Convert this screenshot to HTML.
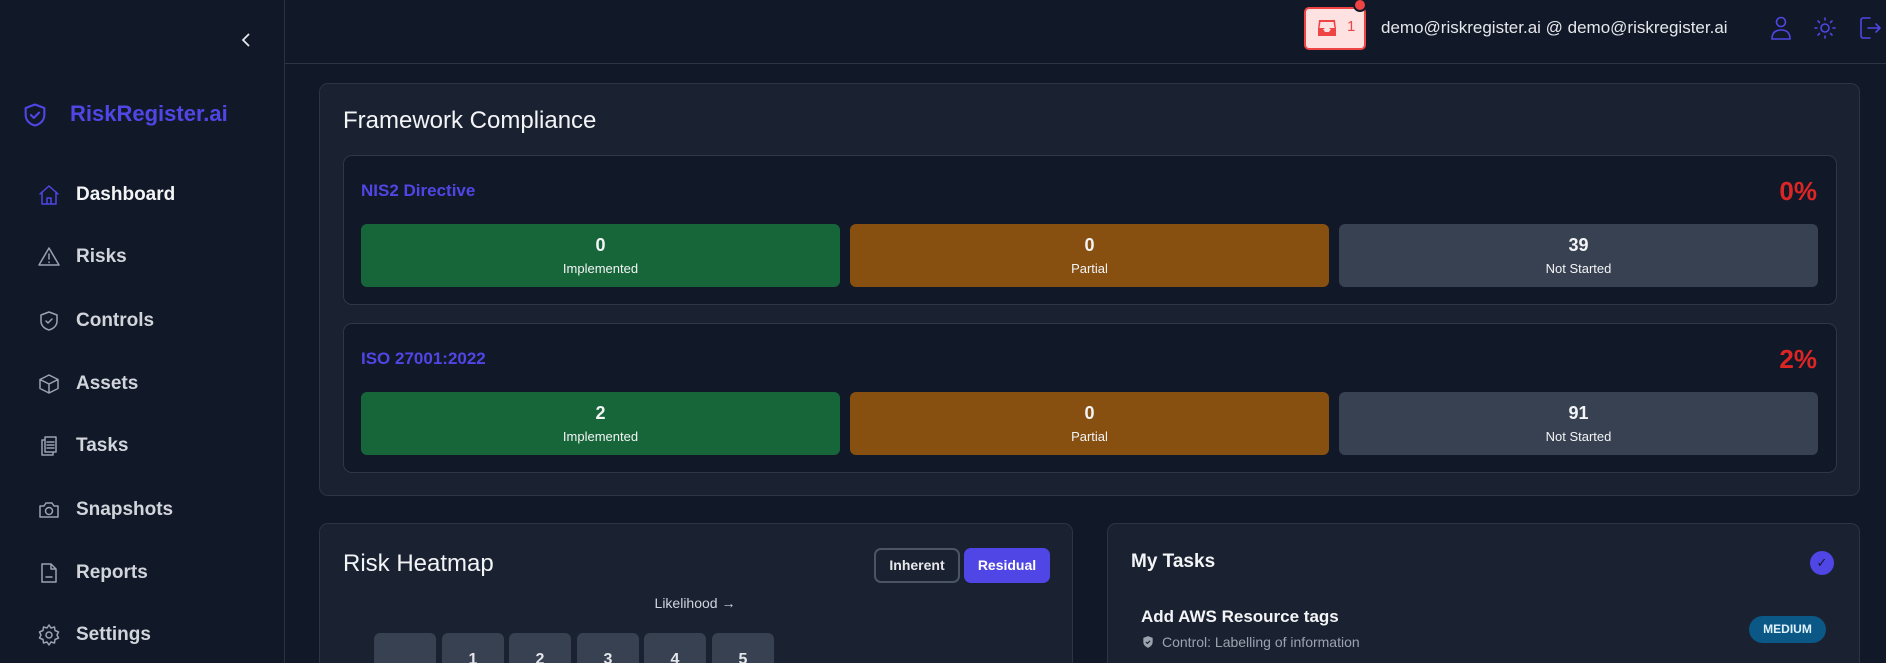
<!DOCTYPE html>
<html style="overflow:hidden;height:663px"><head><meta charset="utf-8"><style>
*{box-sizing:border-box;margin:0;padding:0}
body{width:1886px;height:663px;overflow:hidden;background:#111827;font-family:"Liberation Sans",sans-serif;color:#e5e7eb;position:relative}
.a{position:absolute}
.side{left:0;top:0;width:285px;height:663px;border-right:1px solid #2a3240;background:#111827}
.hdr{left:285px;top:0;right:0;height:64px;border-bottom:1px solid #2d3544}
.nav{left:37px;width:240px;height:30px;display:flex;align-items:center;font-size:19px;font-weight:bold;color:#d1d5db}
.nav svg{width:24px;height:24px;margin-right:15px;fill:none;stroke:#9ca3af;stroke-width:1.5;stroke-linecap:round;stroke-linejoin:round}
.card{background:#1a2131;border:1px solid #2d3544;border-radius:9px}
.inner{background:#111827;border:1px solid #2f3746;border-radius:9px}
.box{border-radius:6px;text-align:center;color:#f3f4f6}
.box b{display:block;font-size:18px;margin-top:11px}
.box span{display:block;font-size:13px;margin-top:5px}
.g{background:#17663a}.o{background:#874f10}.s{background:#374151}
.fw{font-size:17px;font-weight:bold;color:#4f46e5}
.pct{font-size:26px;font-weight:bold;color:#dc2626}
.cell{top:633px;width:62px;height:30px;background:#374151;border-radius:6px 6px 0 0;text-align:center;font-size:16px;font-weight:bold;padding-top:18px}
</style></head><body>
<div class="a side"></div>
<div class="a hdr"></div>
<svg class="a" style="left:238px;top:31px" width="16" height="18" viewBox="0 0 16 18"><path d="M11 3 L5 9 L11 15" stroke="#e5e7eb" stroke-width="1.8" fill="none"/></svg>
<svg class="a" style="left:21px;top:101px" width="28" height="28" viewBox="0 0 24 24" fill="none" stroke="#4f46e5" stroke-width="1.8" stroke-linecap="round" stroke-linejoin="round"><path d="M12 3 L20 6 V12 C20 17 16 20 12 21 C8 20 4 17 4 12 V6 Z"/><path d="M8.5 12 L11 14.5 L15.5 10"/></svg>
<div class="a" style="left:70px;top:101px;font-size:22px;font-weight:bold;color:#4f46e5">RiskRegister.ai</div>

<div class="a nav" style="top:180px;color:#f3f4f6"><svg viewBox="0 0 24 24" style="stroke:#4f46e5"><path d="M3 11 L12 3 L21 11 M5 9 V21 H19 V9 M10 21 V15 H14 V21"/></svg>Dashboard</div>
<div class="a nav" style="top:242px"><svg viewBox="0 0 24 24"><path d="M12 3 L22 20 H2 Z M12 9 V14 M12 17 V17.5"/></svg>Risks</div>
<div class="a nav" style="top:306px"><svg viewBox="0 0 24 24"><path d="M12 3 L20 6 V12 C20 17 16 20 12 21 C8 20 4 17 4 12 V6 Z M9 12 L11 14 L15 10"/></svg>Controls</div>
<div class="a nav" style="top:369px"><svg viewBox="0 0 24 24"><path d="M12 3 L21 7.5 V16.5 L12 21 L3 16.5 V7.5 Z M3 7.5 L12 12 L21 7.5 M12 12 V21"/></svg>Assets</div>
<div class="a nav" style="top:431px"><svg viewBox="0 0 24 24"><path d="M8 6 H5 V21 H16 V18 M8 3 H19 V18 H8 Z M10 8 H17 M10 11 H17 M10 14 H17"/></svg>Tasks</div>
<div class="a nav" style="top:495px"><svg viewBox="0 0 24 24"><path d="M3 8 H7 L9 5 H15 L17 8 H21 V19 H3 Z"/><circle cx="12" cy="13" r="3.5"/></svg>Snapshots</div>
<div class="a nav" style="top:558px"><svg viewBox="0 0 24 24"><path d="M5 3 H14 L19 8 V21 H5 Z M14 3 V8 H19 M9 16 H15"/></svg>Reports</div>
<div class="a nav" style="top:620px"><svg viewBox="0 0 24 24"><circle cx="12" cy="12" r="3"/><path d="M12 2 L14 5 L17.5 4 L18 7.5 L21.5 9 L20 12 L21.5 15 L18 16.5 L17.5 20 L14 19 L12 22 L10 19 L6.5 20 L6 16.5 L2.5 15 L4 12 L2.5 9 L6 7.5 L6.5 4 L10 5 Z"/></svg>Settings</div>

<div class="a" style="left:1304px;top:7px;width:62px;height:43px;background:#fee2e2;border:2px solid #ef4444;border-radius:5px"></div>
<svg class="a" style="left:1314px;top:16px" width="26" height="24" viewBox="0 0 24 24"><path d="M4 4 H20 L21 13 V20 H3 V13 Z" fill="#ef4444"/><path d="M3 13 H8 L10 16 H14 L16 13 H21" fill="#fee2e2"/><path d="M5.5 6 H18.5 L19.5 12 H15 L13.5 14 H10.5 L9 12 H4.5 Z" fill="#fee2e2"/></svg>
<div class="a" style="left:1347px;top:18px;font-size:15px;color:#ef4444">1</div>
<div class="a" style="left:1353px;top:-2px;width:14px;height:14px;border-radius:50%;background:#ef4444;border:2px solid #111827"></div>
<div class="a" style="left:1381px;top:18px;font-size:17px;color:#e5e7eb">demo@riskregister.ai @ demo@riskregister.ai</div>
<svg class="a" style="left:1769px;top:15px" width="24" height="26" viewBox="0 0 24 26" fill="none" stroke="#4f46e5" stroke-width="1.6"><circle cx="12" cy="7" r="4.5"/><path d="M3 24 C3 17 7 15 12 15 C17 15 21 17 21 24 Z"/></svg>
<svg class="a" style="left:1813px;top:16px" width="24" height="24" viewBox="0 0 24 24" fill="none" stroke="#4f46e5" stroke-width="1.6" stroke-linecap="round"><circle cx="12" cy="12" r="4"/><path d="M12 2V4M12 20V22M2 12H4M20 12H22M5 5L6.5 6.5M17.5 17.5L19 19M5 19L6.5 17.5M17.5 6.5L19 5"/></svg>
<svg class="a" style="left:1857px;top:15px" width="26" height="26" viewBox="0 0 26 26" fill="none" stroke="#4f46e5" stroke-width="1.6" stroke-linecap="round" stroke-linejoin="round"><path d="M13 3 H6 C5 3 4 4 4 5 V21 C4 22 5 23 6 23 H13 M11 13 H23 M19 9 L23 13 L19 17"/></svg>

<div class="a card" style="left:319px;top:83px;width:1541px;height:413px"></div>
<div class="a" style="left:343px;top:107px;font-size:24px;color:#f3f4f6">Framework Compliance</div>

<div class="a inner" style="left:343px;top:155px;width:1494px;height:150px"></div>
<div class="a fw" style="left:361px;top:181px">NIS2 Directive</div>
<div class="a pct" style="right:69px;top:176px">0%</div>
<div class="a box g" style="left:361px;top:224px;width:479px;height:63px"><b>0</b><span>Implemented</span></div>
<div class="a box o" style="left:850px;top:224px;width:479px;height:63px"><b>0</b><span>Partial</span></div>
<div class="a box s" style="left:1339px;top:224px;width:479px;height:63px"><b>39</b><span>Not Started</span></div>

<div class="a inner" style="left:343px;top:323px;width:1494px;height:150px"></div>
<div class="a fw" style="left:361px;top:349px">ISO 27001:2022</div>
<div class="a pct" style="right:69px;top:344px">2%</div>
<div class="a box g" style="left:361px;top:392px;width:479px;height:63px"><b>2</b><span>Implemented</span></div>
<div class="a box o" style="left:850px;top:392px;width:479px;height:63px"><b>0</b><span>Partial</span></div>
<div class="a box s" style="left:1339px;top:392px;width:479px;height:63px"><b>91</b><span>Not Started</span></div>

<div class="a card" style="left:319px;top:523px;width:754px;height:150px;border-bottom:none;border-radius:9px 9px 0 0"></div>
<div class="a" style="left:343px;top:550px;font-size:24px;color:#f3f4f6">Risk Heatmap</div>
<div class="a" style="left:874px;top:548px;width:86px;height:35px;border:2px solid #4b5563;border-radius:7px;font-size:14px;font-weight:bold;color:#e5e7eb;text-align:center;line-height:31px">Inherent</div>
<div class="a" style="left:964px;top:548px;width:86px;height:35px;background:#4f46e5;border-radius:7px;font-size:14px;font-weight:bold;color:#fff;text-align:center;line-height:35px">Residual</div>
<div class="a" style="left:620px;top:595px;width:150px;text-align:center;font-size:14px;color:#d1d5db">Likelihood →</div>
<div class="a cell" style="left:374px"></div>
<div class="a cell" style="left:442px">1</div>
<div class="a cell" style="left:509px">2</div>
<div class="a cell" style="left:577px">3</div>
<div class="a cell" style="left:644px">4</div>
<div class="a cell" style="left:712px">5</div>

<div class="a card" style="left:1107px;top:523px;width:753px;height:150px;border-bottom:none;border-radius:9px 9px 0 0"></div>
<div class="a" style="left:1131px;top:551px;font-size:19px;font-weight:bold;color:#f3f4f6">My Tasks</div>
<div class="a" style="left:1810px;top:551px;width:24px;height:24px;border-radius:50%;background:#4f46e5;color:#111827;font-size:13px;text-align:center;line-height:24px">✓</div>
<div class="a" style="left:1141px;top:607px;font-size:17px;font-weight:bold;color:#f3f4f6">Add AWS Resource tags</div>
<svg class="a" style="left:1141px;top:634px" width="14" height="16" viewBox="0 0 24 24"><path d="M12 2 L20 5 V12 C20 17 16 20 12 22 C8 20 4 17 4 12 V5 Z" fill="#9ca3af"/><path d="M8.5 12 L11 14.5 L15.5 10" stroke="#1a2131" stroke-width="2" fill="none"/></svg>
<div class="a" style="left:1162px;top:634px;font-size:14px;color:#9ca3af">Control: Labelling of information</div>
<div class="a" style="left:1749px;top:616px;width:77px;height:27px;border-radius:14px;background:#0b5785;color:#e0f2fe;font-size:12px;font-weight:bold;text-align:center;line-height:27px">MEDIUM</div>
</body></html>
